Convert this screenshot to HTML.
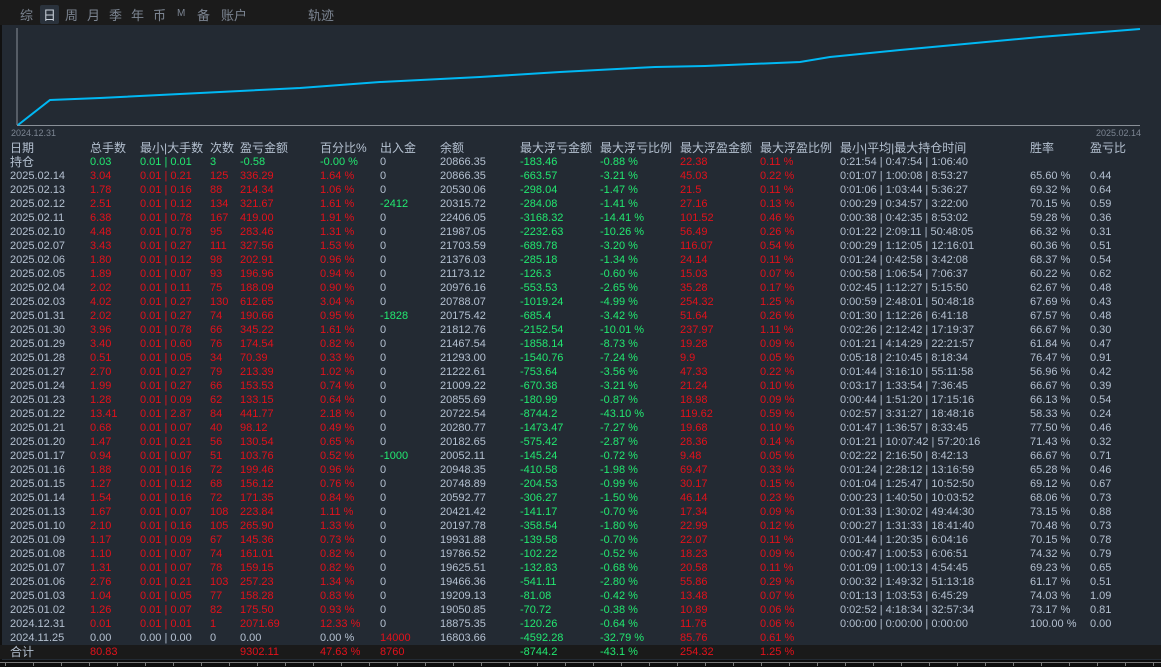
<!DOCTYPE html><html><head><meta charset="utf-8"><style>
*{margin:0;padding:0;box-sizing:border-box}
html,body{width:1161px;height:667px;overflow:hidden}
body{background:#232a33;font-family:"Liberation Sans","Noto Sans CJK SC",sans-serif;font-size:11px;color:#b4c0d0;position:relative}
#top{position:absolute;left:0;top:0;width:1161px;height:25px;background:#1b1b1b}
#top span{position:absolute;top:5px;font-size:13px;color:#7c8592}
#top .on{background:#2a323c;color:#c8d0da;padding:0 3px;margin-left:-3px;border-radius:2px}
#rows{position:absolute;left:0;top:141px;width:1161px}
.r{height:14px;line-height:14px;white-space:nowrap;display:flex}
.r span{display:block;overflow:visible;flex:none}
.r span:nth-child(1){padding-left:10px;width:90px}
.r span:nth-child(2){width:50px}
.r span:nth-child(3){width:70px}
.r span:nth-child(4){width:30px}
.r span:nth-child(5){width:80px}
.r span:nth-child(6){width:60px}
.r span:nth-child(7){width:60px}
.r span:nth-child(8){width:80px}
.r span:nth-child(9){width:80px}
.r span:nth-child(10){width:80px}
.r span:nth-child(11){width:80px}
.r span:nth-child(12){width:80px}
.r span:nth-child(13){width:190px}
.r span:nth-child(14){width:60px}
.h{font-size:12px;color:#b4c0d0}
.d span:nth-child(n+2):nth-child(-n+6),.d span:nth-child(11),.d span:nth-child(12){color:#e3111b}
.d span:nth-child(9),.d span:nth-child(10){color:#22e870}
.g{color:#22e870!important}.rd{color:#e3111b!important}.w{color:#b4c0d0!important}
.tot{background:#1a1a1a}
.c{font-size:12px}
#ruler{position:absolute;left:0;top:660px;width:1161px;height:7px;background:#0c0c0c}
</style></head><body>
<div id="top">
<span style="left:20px">综</span><span class="on" style="left:43px">日</span><span style="left:65px">周</span><span style="left:87px">月</span><span style="left:109px">季</span><span style="left:131px">年</span><span style="left:153px">币</span><span style="left:177px;font-size:10px;top:8px">M</span><span style="left:197px">备</span><span style="left:221px">账户</span><span style="left:308px">轨迹</span>
</div>
<div style="position:absolute;left:0;top:25px;width:2px;height:642px;background:#111"></div>
<svg style="position:absolute;left:0;top:0" width="1161" height="140">
<line x1="17" y1="28" x2="17" y2="125" stroke="#8a9098" stroke-width="1"/>
<line x1="17" y1="125.5" x2="1140" y2="125.5" stroke="#8a9098" stroke-width="1"/>
<polyline fill="none" stroke="#00b8f4" stroke-width="2" points="18,125 50,100 100,98 200,93 300,88 380,82 480,77 560,72 655,67 705,66 800,62 830,57 900,50 1040,37 1140,29"/>
<text x="11" y="136" font-size="9" fill="#7c8592" font-family="Liberation Sans">2024.12.31</text>
<text x="1096" y="136" font-size="9" fill="#7c8592" font-family="Liberation Sans">2025.02.14</text>
</svg>
<div id="rows">
<div class="r h"><span>日期</span><span>总手数</span><span>最小|大手数</span><span>次数</span><span>盈亏金额</span><span>百分比%</span><span>出入金</span><span>余额</span><span>最大浮亏金额</span><span>最大浮亏比例</span><span>最大浮盈金额</span><span>最大浮盈比例</span><span>最小|平均|最大持仓时间</span><span>胜率</span><span>盈亏比</span></div>
<div class="r d"><span class="c">持仓</span><span class="g">0.03</span><span class="g">0.01 | 0.01</span><span class="g">3</span><span class="g">-0.58</span><span class="g">-0.00 %</span><span>0</span><span>20866.35</span><span>-183.46</span><span>-0.88 %</span><span>22.38</span><span>0.11 %</span><span>0:21:54 | 0:47:54 | 1:06:40</span><span></span><span></span></div>
<div class="r d"><span>2025.02.14</span><span>3.04</span><span>0.01 | 0.21</span><span>125</span><span>336.29</span><span>1.64 %</span><span>0</span><span>20866.35</span><span>-663.57</span><span>-3.21 %</span><span>45.03</span><span>0.22 %</span><span>0:01:07 | 1:00:08 | 8:53:27</span><span>65.60 %</span><span>0.44</span></div>
<div class="r d"><span>2025.02.13</span><span>1.78</span><span>0.01 | 0.16</span><span>88</span><span>214.34</span><span>1.06 %</span><span>0</span><span>20530.06</span><span>-298.04</span><span>-1.47 %</span><span>21.5</span><span>0.11 %</span><span>0:01:06 | 1:03:44 | 5:36:27</span><span>69.32 %</span><span>0.64</span></div>
<div class="r d"><span>2025.02.12</span><span>2.51</span><span>0.01 | 0.12</span><span>134</span><span>321.67</span><span>1.61 %</span><span class="g">-2412</span><span>20315.72</span><span>-284.08</span><span>-1.41 %</span><span>27.16</span><span>0.13 %</span><span>0:00:29 | 0:34:57 | 3:22:00</span><span>70.15 %</span><span>0.59</span></div>
<div class="r d"><span>2025.02.11</span><span>6.38</span><span>0.01 | 0.78</span><span>167</span><span>419.00</span><span>1.91 %</span><span>0</span><span>22406.05</span><span>-3168.32</span><span>-14.41 %</span><span>101.52</span><span>0.46 %</span><span>0:00:38 | 0:42:35 | 8:53:02</span><span>59.28 %</span><span>0.36</span></div>
<div class="r d"><span>2025.02.10</span><span>4.48</span><span>0.01 | 0.78</span><span>95</span><span>283.46</span><span>1.31 %</span><span>0</span><span>21987.05</span><span>-2232.63</span><span>-10.26 %</span><span>56.49</span><span>0.26 %</span><span>0:01:22 | 2:09:11 | 50:48:05</span><span>66.32 %</span><span>0.31</span></div>
<div class="r d"><span>2025.02.07</span><span>3.43</span><span>0.01 | 0.27</span><span>111</span><span>327.56</span><span>1.53 %</span><span>0</span><span>21703.59</span><span>-689.78</span><span>-3.20 %</span><span>116.07</span><span>0.54 %</span><span>0:00:29 | 1:12:05 | 12:16:01</span><span>60.36 %</span><span>0.51</span></div>
<div class="r d"><span>2025.02.06</span><span>1.80</span><span>0.01 | 0.12</span><span>98</span><span>202.91</span><span>0.96 %</span><span>0</span><span>21376.03</span><span>-285.18</span><span>-1.34 %</span><span>24.14</span><span>0.11 %</span><span>0:01:24 | 0:42:58 | 3:42:08</span><span>68.37 %</span><span>0.54</span></div>
<div class="r d"><span>2025.02.05</span><span>1.89</span><span>0.01 | 0.07</span><span>93</span><span>196.96</span><span>0.94 %</span><span>0</span><span>21173.12</span><span>-126.3</span><span>-0.60 %</span><span>15.03</span><span>0.07 %</span><span>0:00:58 | 1:06:54 | 7:06:37</span><span>60.22 %</span><span>0.62</span></div>
<div class="r d"><span>2025.02.04</span><span>2.02</span><span>0.01 | 0.11</span><span>75</span><span>188.09</span><span>0.90 %</span><span>0</span><span>20976.16</span><span>-553.53</span><span>-2.65 %</span><span>35.28</span><span>0.17 %</span><span>0:02:45 | 1:12:27 | 5:15:50</span><span>62.67 %</span><span>0.48</span></div>
<div class="r d"><span>2025.02.03</span><span>4.02</span><span>0.01 | 0.27</span><span>130</span><span>612.65</span><span>3.04 %</span><span>0</span><span>20788.07</span><span>-1019.24</span><span>-4.99 %</span><span>254.32</span><span>1.25 %</span><span>0:00:59 | 2:48:01 | 50:48:18</span><span>67.69 %</span><span>0.43</span></div>
<div class="r d"><span>2025.01.31</span><span>2.02</span><span>0.01 | 0.27</span><span>74</span><span>190.66</span><span>0.95 %</span><span class="g">-1828</span><span>20175.42</span><span>-685.4</span><span>-3.42 %</span><span>51.64</span><span>0.26 %</span><span>0:01:30 | 1:12:26 | 6:41:18</span><span>67.57 %</span><span>0.48</span></div>
<div class="r d"><span>2025.01.30</span><span>3.96</span><span>0.01 | 0.78</span><span>66</span><span>345.22</span><span>1.61 %</span><span>0</span><span>21812.76</span><span>-2152.54</span><span>-10.01 %</span><span>237.97</span><span>1.11 %</span><span>0:02:26 | 2:12:42 | 17:19:37</span><span>66.67 %</span><span>0.30</span></div>
<div class="r d"><span>2025.01.29</span><span>3.40</span><span>0.01 | 0.60</span><span>76</span><span>174.54</span><span>0.82 %</span><span>0</span><span>21467.54</span><span>-1858.14</span><span>-8.73 %</span><span>19.28</span><span>0.09 %</span><span>0:01:21 | 4:14:29 | 22:21:57</span><span>61.84 %</span><span>0.47</span></div>
<div class="r d"><span>2025.01.28</span><span>0.51</span><span>0.01 | 0.05</span><span>34</span><span>70.39</span><span>0.33 %</span><span>0</span><span>21293.00</span><span>-1540.76</span><span>-7.24 %</span><span>9.9</span><span>0.05 %</span><span>0:05:18 | 2:10:45 | 8:18:34</span><span>76.47 %</span><span>0.91</span></div>
<div class="r d"><span>2025.01.27</span><span>2.70</span><span>0.01 | 0.27</span><span>79</span><span>213.39</span><span>1.02 %</span><span>0</span><span>21222.61</span><span>-753.64</span><span>-3.56 %</span><span>47.33</span><span>0.22 %</span><span>0:01:44 | 3:16:10 | 55:11:58</span><span>56.96 %</span><span>0.42</span></div>
<div class="r d"><span>2025.01.24</span><span>1.99</span><span>0.01 | 0.27</span><span>66</span><span>153.53</span><span>0.74 %</span><span>0</span><span>21009.22</span><span>-670.38</span><span>-3.21 %</span><span>21.24</span><span>0.10 %</span><span>0:03:17 | 1:33:54 | 7:36:45</span><span>66.67 %</span><span>0.39</span></div>
<div class="r d"><span>2025.01.23</span><span>1.28</span><span>0.01 | 0.09</span><span>62</span><span>133.15</span><span>0.64 %</span><span>0</span><span>20855.69</span><span>-180.99</span><span>-0.87 %</span><span>18.98</span><span>0.09 %</span><span>0:00:44 | 1:51:20 | 17:15:16</span><span>66.13 %</span><span>0.54</span></div>
<div class="r d"><span>2025.01.22</span><span>13.41</span><span>0.01 | 2.87</span><span>84</span><span>441.77</span><span>2.18 %</span><span>0</span><span>20722.54</span><span>-8744.2</span><span>-43.10 %</span><span>119.62</span><span>0.59 %</span><span>0:02:57 | 3:31:27 | 18:48:16</span><span>58.33 %</span><span>0.24</span></div>
<div class="r d"><span>2025.01.21</span><span>0.68</span><span>0.01 | 0.07</span><span>40</span><span>98.12</span><span>0.49 %</span><span>0</span><span>20280.77</span><span>-1473.47</span><span>-7.27 %</span><span>19.68</span><span>0.10 %</span><span>0:01:47 | 1:36:57 | 8:33:45</span><span>77.50 %</span><span>0.46</span></div>
<div class="r d"><span>2025.01.20</span><span>1.47</span><span>0.01 | 0.21</span><span>56</span><span>130.54</span><span>0.65 %</span><span>0</span><span>20182.65</span><span>-575.42</span><span>-2.87 %</span><span>28.36</span><span>0.14 %</span><span>0:01:21 | 10:07:42 | 57:20:16</span><span>71.43 %</span><span>0.32</span></div>
<div class="r d"><span>2025.01.17</span><span>0.94</span><span>0.01 | 0.07</span><span>51</span><span>103.76</span><span>0.52 %</span><span class="g">-1000</span><span>20052.11</span><span>-145.24</span><span>-0.72 %</span><span>9.48</span><span>0.05 %</span><span>0:02:22 | 2:16:50 | 8:42:13</span><span>66.67 %</span><span>0.71</span></div>
<div class="r d"><span>2025.01.16</span><span>1.88</span><span>0.01 | 0.16</span><span>72</span><span>199.46</span><span>0.96 %</span><span>0</span><span>20948.35</span><span>-410.58</span><span>-1.98 %</span><span>69.47</span><span>0.33 %</span><span>0:01:24 | 2:28:12 | 13:16:59</span><span>65.28 %</span><span>0.46</span></div>
<div class="r d"><span>2025.01.15</span><span>1.27</span><span>0.01 | 0.12</span><span>68</span><span>156.12</span><span>0.76 %</span><span>0</span><span>20748.89</span><span>-204.53</span><span>-0.99 %</span><span>30.17</span><span>0.15 %</span><span>0:01:04 | 1:25:47 | 10:52:50</span><span>69.12 %</span><span>0.67</span></div>
<div class="r d"><span>2025.01.14</span><span>1.54</span><span>0.01 | 0.16</span><span>72</span><span>171.35</span><span>0.84 %</span><span>0</span><span>20592.77</span><span>-306.27</span><span>-1.50 %</span><span>46.14</span><span>0.23 %</span><span>0:00:23 | 1:40:50 | 10:03:52</span><span>68.06 %</span><span>0.73</span></div>
<div class="r d"><span>2025.01.13</span><span>1.67</span><span>0.01 | 0.07</span><span>108</span><span>223.84</span><span>1.11 %</span><span>0</span><span>20421.42</span><span>-141.17</span><span>-0.70 %</span><span>17.34</span><span>0.09 %</span><span>0:01:33 | 1:30:02 | 49:44:30</span><span>73.15 %</span><span>0.88</span></div>
<div class="r d"><span>2025.01.10</span><span>2.10</span><span>0.01 | 0.16</span><span>105</span><span>265.90</span><span>1.33 %</span><span>0</span><span>20197.78</span><span>-358.54</span><span>-1.80 %</span><span>22.99</span><span>0.12 %</span><span>0:00:27 | 1:31:33 | 18:41:40</span><span>70.48 %</span><span>0.73</span></div>
<div class="r d"><span>2025.01.09</span><span>1.17</span><span>0.01 | 0.09</span><span>67</span><span>145.36</span><span>0.73 %</span><span>0</span><span>19931.88</span><span>-139.58</span><span>-0.70 %</span><span>22.07</span><span>0.11 %</span><span>0:01:44 | 1:20:35 | 6:04:16</span><span>70.15 %</span><span>0.78</span></div>
<div class="r d"><span>2025.01.08</span><span>1.10</span><span>0.01 | 0.07</span><span>74</span><span>161.01</span><span>0.82 %</span><span>0</span><span>19786.52</span><span>-102.22</span><span>-0.52 %</span><span>18.23</span><span>0.09 %</span><span>0:00:47 | 1:00:53 | 6:06:51</span><span>74.32 %</span><span>0.79</span></div>
<div class="r d"><span>2025.01.07</span><span>1.31</span><span>0.01 | 0.07</span><span>78</span><span>159.15</span><span>0.82 %</span><span>0</span><span>19625.51</span><span>-132.83</span><span>-0.68 %</span><span>20.58</span><span>0.11 %</span><span>0:01:09 | 1:00:13 | 4:54:45</span><span>69.23 %</span><span>0.65</span></div>
<div class="r d"><span>2025.01.06</span><span>2.76</span><span>0.01 | 0.21</span><span>103</span><span>257.23</span><span>1.34 %</span><span>0</span><span>19466.36</span><span>-541.11</span><span>-2.80 %</span><span>55.86</span><span>0.29 %</span><span>0:00:32 | 1:49:32 | 51:13:18</span><span>61.17 %</span><span>0.51</span></div>
<div class="r d"><span>2025.01.03</span><span>1.04</span><span>0.01 | 0.05</span><span>77</span><span>158.28</span><span>0.83 %</span><span>0</span><span>19209.13</span><span>-81.08</span><span>-0.42 %</span><span>13.48</span><span>0.07 %</span><span>0:01:13 | 1:03:53 | 6:45:29</span><span>74.03 %</span><span>1.09</span></div>
<div class="r d"><span>2025.01.02</span><span>1.26</span><span>0.01 | 0.07</span><span>82</span><span>175.50</span><span>0.93 %</span><span>0</span><span>19050.85</span><span>-70.72</span><span>-0.38 %</span><span>10.89</span><span>0.06 %</span><span>0:02:52 | 4:18:34 | 32:57:34</span><span>73.17 %</span><span>0.81</span></div>
<div class="r d"><span>2024.12.31</span><span>0.01</span><span>0.01 | 0.01</span><span>1</span><span>2071.69</span><span>12.33 %</span><span>0</span><span>18875.35</span><span>-120.26</span><span>-0.64 %</span><span>11.76</span><span>0.06 %</span><span>0:00:00 | 0:00:00 | 0:00:00</span><span>100.00 %</span><span>0.00</span></div>
<div class="r d"><span>2024.11.25</span><span class="w">0.00</span><span class="w">0.00 | 0.00</span><span class="w">0</span><span class="w">0.00</span><span class="w">0.00 %</span><span class="rd">14000</span><span>16803.66</span><span>-4592.28</span><span>-32.79 %</span><span>85.76</span><span>0.61 %</span><span></span><span></span><span></span></div>
<div class="r d tot"><span class="c">合计</span><span>80.83</span><span></span><span></span><span>9302.11</span><span>47.63 %</span><span class="rd">8760</span><span></span><span>-8744.2</span><span>-43.1 %</span><span>254.32</span><span>1.25 %</span><span></span><span></span><span></span></div>
</div>
<div id="ruler"><svg width="1161" height="7"><g stroke="#777" stroke-width="1">
<line x1="0" y1="0.5" x2="1161" y2="0.5"/>
<line x1="5.5" y1="0" x2="5.5" y2="4"/><line x1="33.5" y1="0" x2="33.5" y2="4"/><line x1="61.5" y1="0" x2="61.5" y2="4"/><line x1="89.5" y1="0" x2="89.5" y2="4"/><line x1="117.5" y1="0" x2="117.5" y2="4"/><line x1="145.5" y1="0" x2="145.5" y2="4"/><line x1="173.5" y1="0" x2="173.5" y2="4"/><line x1="201.5" y1="0" x2="201.5" y2="4"/><line x1="229.5" y1="0" x2="229.5" y2="4"/><line x1="257.5" y1="0" x2="257.5" y2="4"/><line x1="285.5" y1="0" x2="285.5" y2="4"/><line x1="313.5" y1="0" x2="313.5" y2="4"/><line x1="341.5" y1="0" x2="341.5" y2="4"/><line x1="369.5" y1="0" x2="369.5" y2="4"/><line x1="397.5" y1="0" x2="397.5" y2="4"/><line x1="425.5" y1="0" x2="425.5" y2="4"/><line x1="453.5" y1="0" x2="453.5" y2="4"/><line x1="481.5" y1="0" x2="481.5" y2="4"/><line x1="509.5" y1="0" x2="509.5" y2="4"/><line x1="537.5" y1="0" x2="537.5" y2="4"/><line x1="565.5" y1="0" x2="565.5" y2="4"/><line x1="593.5" y1="0" x2="593.5" y2="4"/><line x1="621.5" y1="0" x2="621.5" y2="4"/><line x1="649.5" y1="0" x2="649.5" y2="4"/><line x1="677.5" y1="0" x2="677.5" y2="4"/><line x1="705.5" y1="0" x2="705.5" y2="4"/><line x1="733.5" y1="0" x2="733.5" y2="4"/><line x1="761.5" y1="0" x2="761.5" y2="4"/><line x1="789.5" y1="0" x2="789.5" y2="4"/><line x1="817.5" y1="0" x2="817.5" y2="4"/><line x1="845.5" y1="0" x2="845.5" y2="4"/><line x1="873.5" y1="0" x2="873.5" y2="4"/><line x1="901.5" y1="0" x2="901.5" y2="4"/><line x1="929.5" y1="0" x2="929.5" y2="4"/><line x1="957.5" y1="0" x2="957.5" y2="4"/><line x1="985.5" y1="0" x2="985.5" y2="4"/><line x1="1013.5" y1="0" x2="1013.5" y2="4"/><line x1="1041.5" y1="0" x2="1041.5" y2="4"/><line x1="1069.5" y1="0" x2="1069.5" y2="4"/><line x1="1097.5" y1="0" x2="1097.5" y2="4"/><line x1="1125.5" y1="0" x2="1125.5" y2="4"/><line x1="1153.5" y1="0" x2="1153.5" y2="4"/>
</g></svg></div>
</body></html>
